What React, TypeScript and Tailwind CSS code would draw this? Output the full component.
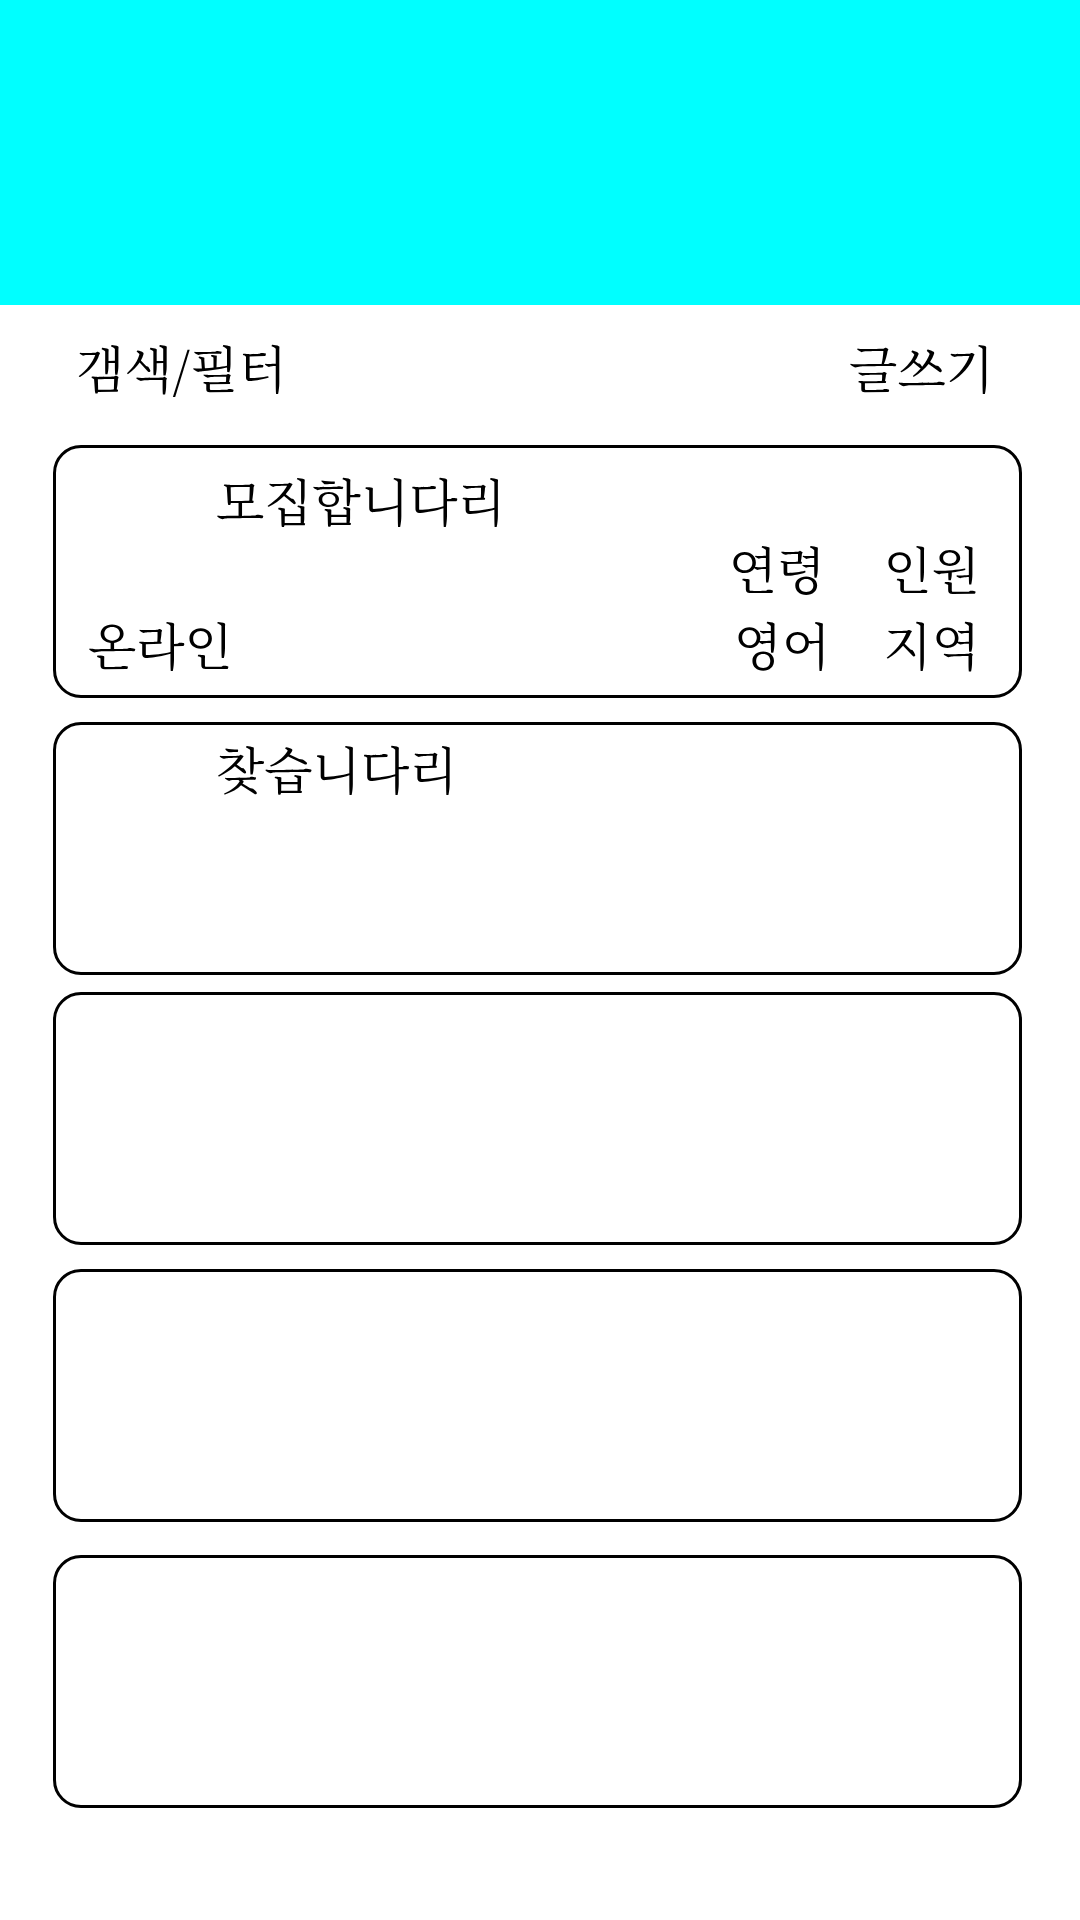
import React from 'react';

// 게시글 카드 (빈 카드 포함)
const PostCard: React.FC<{ className?: string; children?: React.ReactNode }> = ({ className = '', children }) => (
  <div className={`h-[253px] w-[969px] ml-[53px] border-[3px] border-black rounded-[28px] flex flex-col ${className}`}>
    {children}
  </div>
);

const App: React.FC = () => {
  return (
    <div className="w-[1080px] h-[1920px] bg-white text-black font-['Noto_Serif_CJK_KR','UnBatang','Baekmuk_Batang','NanumMyeongjo','Liberation_Serif','Noto_Sans_CJK_KR',serif] text-[50px] leading-[50px]">
      {/* 상단 배너 */}
      <div className="h-[305px] bg-[#00ffff]" />

      {/* 검색 / 글쓰기 */}
      <div className="flex justify-between items-start pl-[76px] pr-[86px] h-[140px] pt-[36px]">
        <span>갬색/필터</span>
        <span>글쓰기</span>
      </div>

      {/* 목록 */}
      <PostCard>
        <p className="ml-[160px] mt-[26px]">모집합니다리</p>
        <div className="flex justify-end pr-[39px] gap-[58px] mt-[18px]">
          <span>연령</span>
          <span>인원</span>
        </div>
        <div className="flex justify-between items-start pl-[32px] pr-[39px] mt-[26px]">
          <span>온라인</span>
          <div className="flex gap-[53px]">
            <span>영어</span>
            <span>지역</span>
          </div>
        </div>
      </PostCard>

      <PostCard className="mt-[24px]">
        <p className="ml-[160px] mt-[17px]">찾습니다리</p>
      </PostCard>

      <PostCard className="mt-[17px]" />
      <PostCard className="mt-[24px]" />
      <PostCard className="mt-[33px]" />
    </div>
  );
};

export default App;
